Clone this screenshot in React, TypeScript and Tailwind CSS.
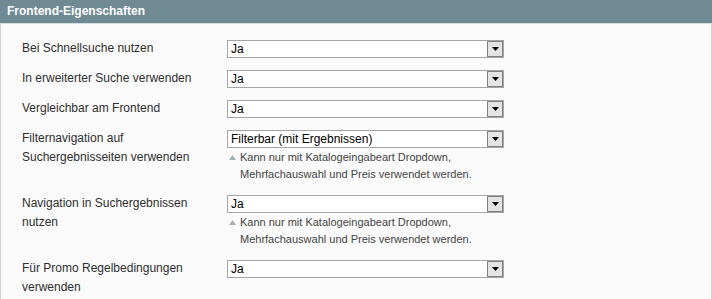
const rows = [
  { label: "Bei Schnellsuche nutzen", value: "Ja" },
  { label: "In erweiterter Suche verwenden", value: "Ja" },
  { label: "Vergleichbar am Frontend", value: "Ja" },
  {
    label: "Filternavigation auf Suchergebnisseiten verwenden",
    value: "Filterbar (mit Ergebnissen)",
    note: true,
  },
  { label: "Navigation in Suchergebnissen nutzen", value: "Ja", note: true },
  { label: "Für Promo Regelbedingungen verwenden", value: "Ja" },
];

function Select({ value }: { value: string }) {
  return (
    <div className="flex h-[18px] w-[277px] border border-[#a5a5a5] bg-white">
      <span className="flex-1 pl-[3px] text-[12px] leading-[16px] text-black">{value}</span>
      <div className="flex h-[16px] w-[16px] items-center justify-center border border-[#808080] bg-[#e4e4e4]">
        <svg width="7" height="4" viewBox="0 0 7 4">
          <path d="M0 0h7L3.5 4z" fill="#000" />
        </svg>
      </div>
    </div>
  );
}

export default function App() {
  return (
    <div
      className="w-[712px] min-h-[299px] bg-[#fafafa]"
      style={{ fontFamily: '"Liberation Sans", Arial, sans-serif' }}
    >
      <div className="h-[24px] border-b border-[#d3dde1] bg-[#6f8a93] pl-[7px] text-[12px] font-bold leading-[23px] text-white">
        Frontend-Eigenschaften
      </div>
      <div className="min-h-[275px] border-x border-[#d0d0d0] pt-[10px]">
        {rows.map((r) => (
          <div key={r.label} className="flex py-[6px]">
            <div className="w-[226px] pl-[21px] pr-[20px] -mt-px text-[12px] leading-[19px] text-[#2f2f2f]">
              {r.label}
            </div>
            <div>
              <Select value={r.value} />
              {r.note && (
                <div className="mt-px flex text-[11px] leading-[17px] text-[#444]">
                  <span className="w-[13px] pl-[2px] pt-[6px]">
                    <svg width="7" height="5" viewBox="0 0 7 5" className="block">
                      <path d="M3.5 0L7 5H0z" fill="#a7b0b4" />
                    </svg>
                  </span>
                  <span>
                    Kann nur mit Katalogeingabeart Dropdown,
                    <br />
                    Mehrfachauswahl und Preis verwendet werden.
                  </span>
                </div>
              )}
            </div>
          </div>
        ))}
      </div>
    </div>
  );
}
